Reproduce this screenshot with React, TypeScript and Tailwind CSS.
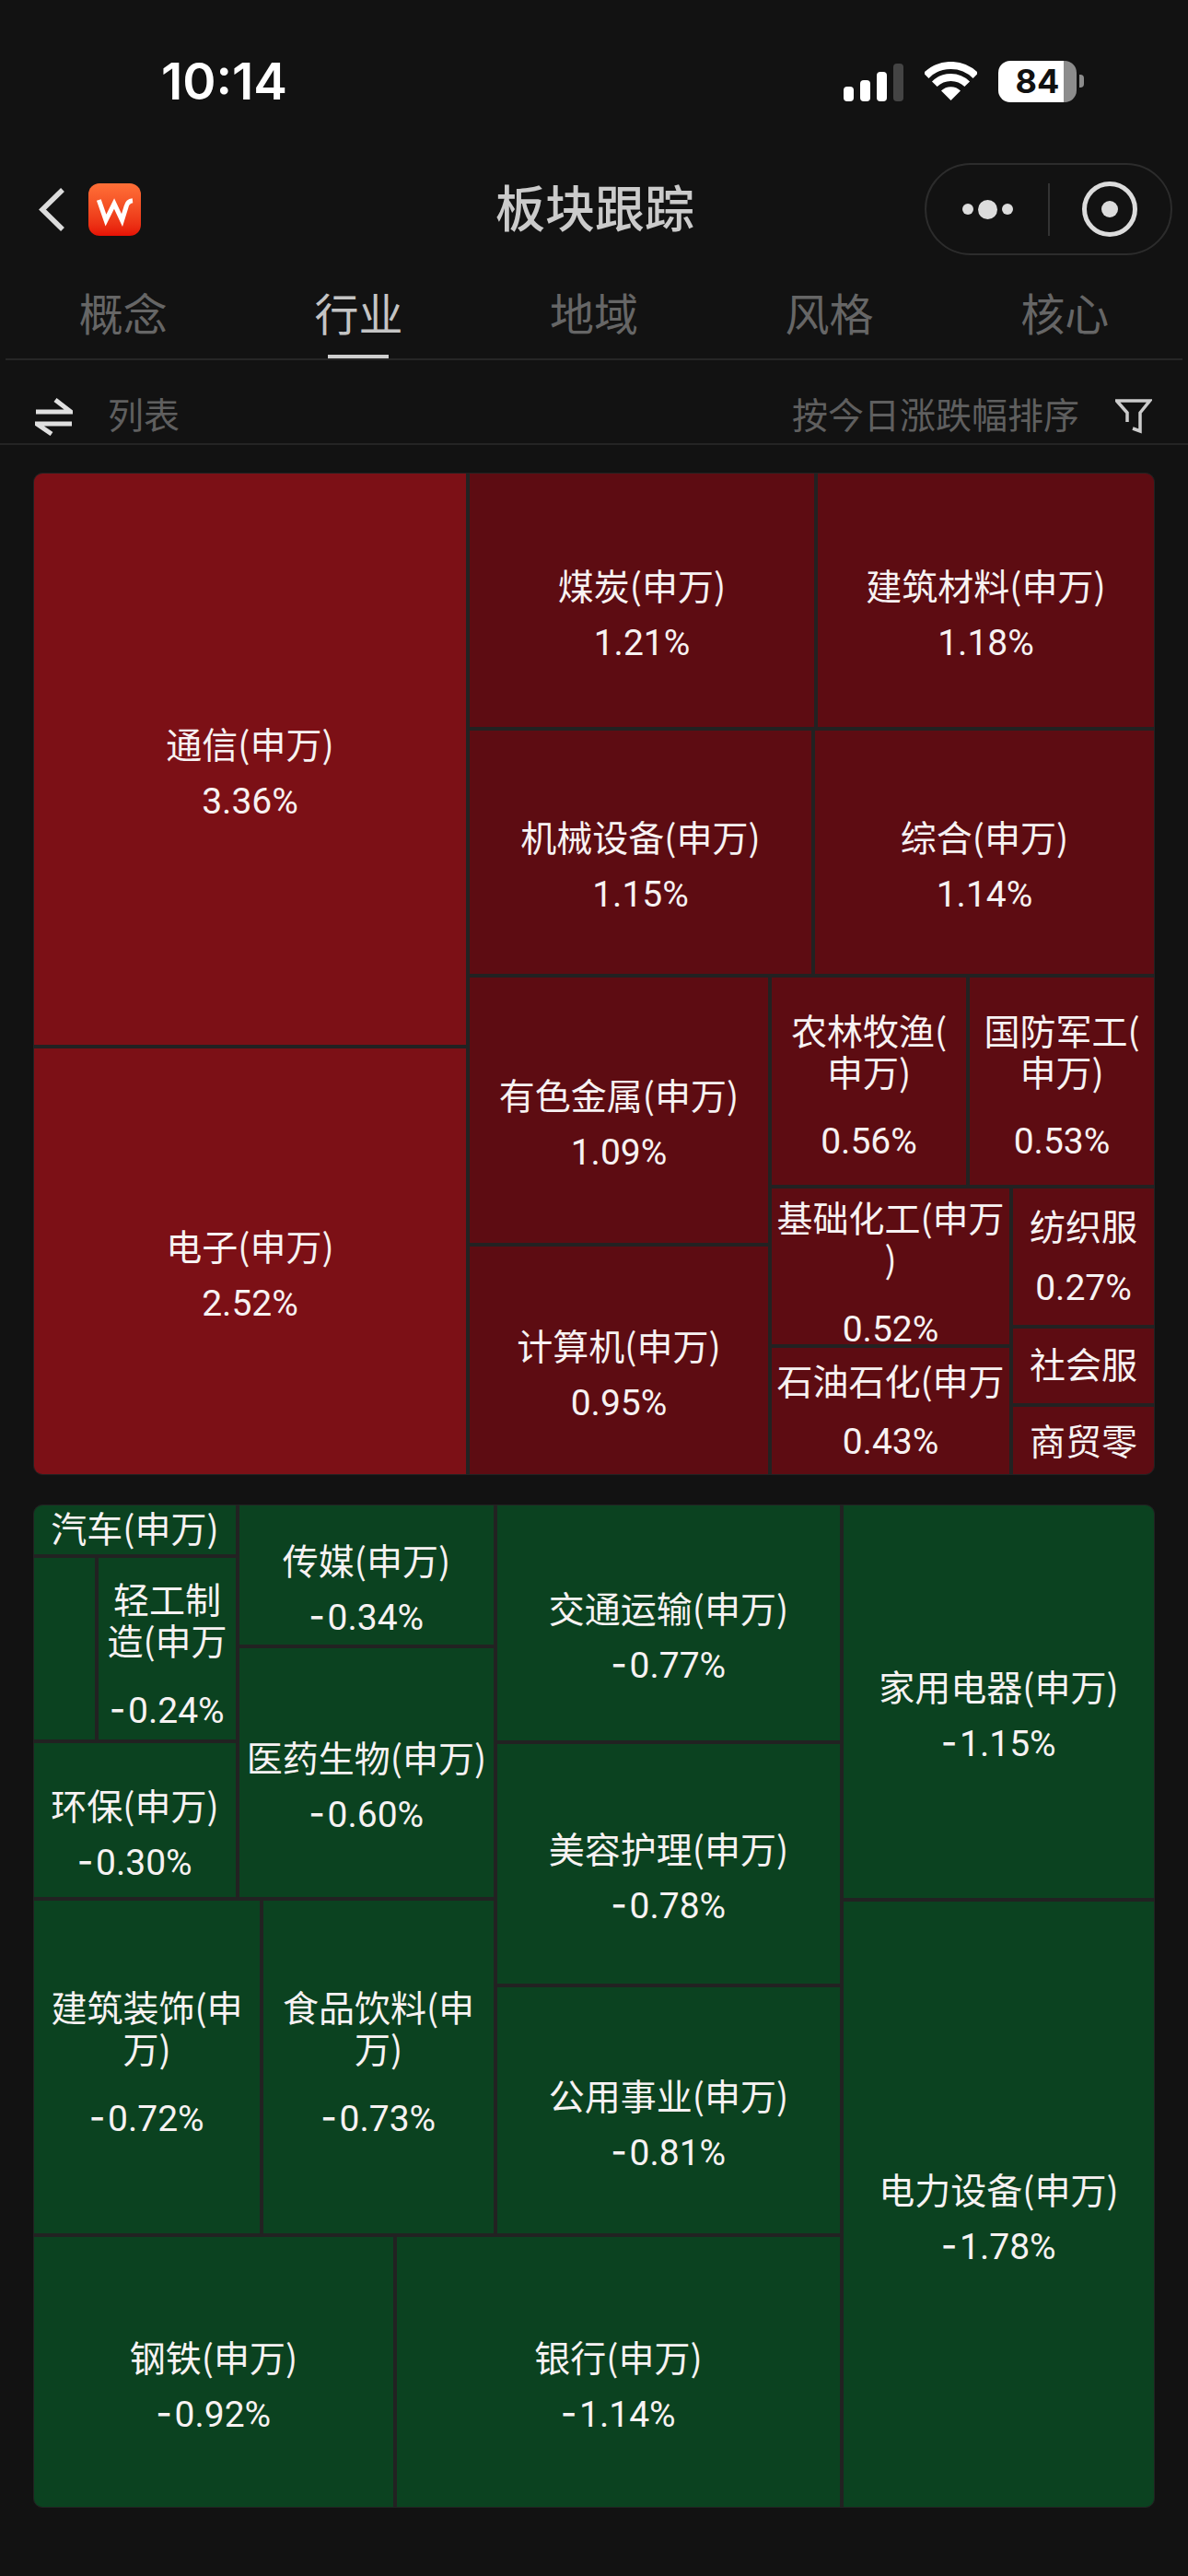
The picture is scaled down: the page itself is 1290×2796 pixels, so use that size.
// Sector tracker: status bar, nav, tabs and two treemaps
const red = 'bg-[#7c1016]';
const dark = 'bg-[#5d0c12]';
const green = 'bg-[#0b4220]';

type CellProps = {
  name: string;
  pct?: string;
  color: string;
  size: string;
  shift?: string; // nudges the label block inside the cell
  gap?: string; // space between name and percent
};

function Cell({ name, pct, color, size, shift = 'pt-[29px]', gap = 'mt-[19px]' }: CellProps) {
  const negative = pct?.startsWith('-');
  return (
    <div className={`${color} ${size} ${shift} flex flex-col items-center justify-center overflow-hidden px-[2px] text-center text-[39px] leading-[45px] text-[#f7f2f2]`}>
      <div className="w-full shrink-0 [line-break:anywhere]">{name}</div>
      {pct && (
        <div className={`${gap} ${negative ? "first-letter:mr-[3px] first-letter:text-[48px] first-letter:leading-[0px] first-letter:[font-family:'Noto_Sans_CJK_SC']" : ''} h-[45px] shrink-0 text-[39px] leading-[45px] [font-family:Roboto,sans-serif]`}>
          {pct}
        </div>
      )}
    </div>
  );
}

function StatusBar() {
  return (
    <div className="flex h-[176px] items-center justify-between pl-[175px] pr-[113px]">
      <div className="text-[55px] font-semibold leading-none text-white [font-family:Inter,sans-serif]">10:14</div>
      <div className="flex items-center">
        <svg width="65" height="41" viewBox="0 0 65 41" className="mt-[2px]">
          <rect x="0" y="25" width="11" height="16" rx="4" fill="#fff" />
          <rect x="18" y="18" width="11" height="23" rx="4" fill="#fff" />
          <rect x="36" y="9" width="11" height="32" rx="4" fill="#fff" />
          <rect x="54" y="0" width="11" height="41" rx="4" fill="#444" />
        </svg>
        <svg width="57" height="42" viewBox="0 0 57 42" className="ml-[23px]" fill="none">
          <path d="M1.6 15.1A38 38 0 0 1 55.4 15.1" stroke="#fff" strokeWidth="8" />
          <path d="M10.8 24.3A25 25 0 0 1 46.2 24.3" stroke="#fff" strokeWidth="8" />
          <path d="M28.5 42L18 31.5A15 15 0 0 1 39 31.5Z" fill="#fff" />
        </svg>
        <div className="ml-[23px] flex h-[45px] w-[85px] items-center justify-center rounded-[13px] bg-[linear-gradient(to_right,#fff_84%,#8c8c8c_84%)] text-[36px] font-bold leading-none text-[#111] [font-family:Inter,sans-serif]">
          84
        </div>
        <div className="ml-[3px] h-[14px] w-[5px] rounded-r-[4px] bg-[#8c8c8c]" />
      </div>
    </div>
  );
}

function NavBar() {
  return (
    <div className="grid h-[102px] grid-cols-[497px_auto_1fr] items-center pl-[41px] pr-[17px]">
      <div className="flex items-center">
        <svg width="31" height="51" viewBox="0 0 31 51" fill="none">
          <path d="M27 4L5 25.5L27 47" stroke="#dcdcdc" strokeWidth="5.5" />
        </svg>
        <div className="ml-[24px] h-[57px] w-[57px] rounded-[12px] bg-gradient-to-b from-[#ff6f37] to-[#e60f05]">
          <svg width="57" height="57" viewBox="0 0 57 57" fill="none">
            <path d="M11.3 18L19 40L28 22L36.5 40L41 25.5C42 21 45 19 48 18.7" stroke="#fff" strokeWidth="5" />
          </svg>
        </div>
      </div>
      <div className="pb-[6px] text-[54px] font-medium leading-none text-[#cbcbcb]">板块跟踪</div>
      <div className="flex justify-end">
        <div className="flex h-[100px] w-[269px] items-center rounded-full border-2 border-[#2c2c2c]">
          <div className="flex flex-1 items-center justify-center gap-[5px]">
            <div className="h-[12px] w-[12px] rounded-full bg-[#dcdcdc]" />
            <div className="h-[21px] w-[21px] rounded-full bg-[#dcdcdc]" />
            <div className="h-[12px] w-[12px] rounded-full bg-[#dcdcdc]" />
          </div>
          <div className="h-[57px] w-[2px] bg-[#333]" />
          <div className="flex w-[131px] items-center justify-center pr-[2px]">
            <div className="flex h-[60px] w-[60px] items-center justify-center rounded-full border-[5px] border-[#dcdcdc]">
              <div className="h-[18px] w-[18px] rounded-full bg-[#dcdcdc]" />
            </div>
          </div>
        </div>
      </div>
    </div>
  );
}

function Tabs() {
  const tabs = ['概念', '行业', '地域', '风格', '核心'];
  return (
    <div className="mx-[6px] flex h-[113px] border-b-2 border-[#262626]">
      {tabs.map((tab, i) => (
        <div key={tab} className={`relative flex-1 pt-[36px] text-center text-[48px] leading-[48px] ${i === 1 ? 'text-[#c4c4c4]' : 'text-[#666]'}`}>
          {tab}
          {i === 1 && <div className="absolute bottom-0 left-1/2 h-[4px] w-[66px] -translate-x-1/2 bg-[#cfcfcf]" />}
        </div>
      ))}
    </div>
  );
}

function FilterBar() {
  return (
    <div className="flex h-[92px] items-center justify-between border-b-2 border-[#242424] pl-[38px] pr-[39px] pt-[28px] text-[39px] leading-none text-[#5f5f5f]">
      <div className="flex items-center">
        <svg width="41" height="41" viewBox="0 0 41 41" fill="none" stroke="#e0e0e0" strokeWidth="5" className="mt-[5px]">
          <path d="M1 15H39L22 2" />
          <path d="M40 28H2L18 39" />
        </svg>
        <span className="mb-[3px] ml-[38px]">列表</span>
      </div>
      <div className="flex items-center">
        <span className="mb-[3px]">按今日涨跌幅排序</span>
        <svg width="40" height="40" viewBox="0 0 40 40" fill="none" stroke="#cccccc" strokeWidth="3.5" className="ml-[39px] mt-[3px]">
          <path d="M13 26V16L1.5 3H37.5L27 16V36L19 33" />
        </svg>
      </div>
    </div>
  );
}

function RedMap() {
  return (
    <div className="mx-[36px] mt-[30px] flex h-[1088px] w-[1218px] gap-[4px] overflow-hidden rounded-[10px] border border-[#222] bg-[#222]">
      <div className="flex w-[469px] flex-col gap-[4px]">
        <Cell name="通信(申万)" pct="3.36%" color={red} size="h-[620px]" />
        <Cell name="电子(申万)" pct="2.52%" color={red} size="h-[462px]" />
      </div>
      <div className="flex w-[743px] flex-col gap-[4px]">
        <div className="flex h-[275px] gap-[4px]">
          <Cell name="煤炭(申万)" pct="1.21%" color={dark} size="w-[374px]" />
          <Cell name="建筑材料(申万)" pct="1.18%" color={dark} size="w-[365px]" />
        </div>
        <div className="flex h-[264px] gap-[4px]">
          <Cell name="机械设备(申万)" pct="1.15%" color={dark} size="w-[371px]" />
          <Cell name="综合(申万)" pct="1.14%" color={dark} size="w-[368px]" />
        </div>
        <div className="flex h-[539px] gap-[4px]">
          <div className="flex w-[324px] flex-col gap-[4px]">
            <Cell name="有色金属(申万)" pct="1.09%" color={dark} size="h-[288px]" />
            <Cell name="计算机(申万)" pct="0.95%" color={dark} size="h-[247px]" />
          </div>
          <div className="flex w-[415px] flex-col gap-[4px]">
            <div className="flex h-[225px] gap-[4px]">
              <Cell name="农林牧渔(申万)" pct="0.56%" color={dark} size="w-[211px]" shift="pt-[10px]" gap="mt-[32px]" />
              <Cell name="国防军工(申万)" pct="0.53%" color={dark} size="w-[200px]" shift="pt-[10px]" gap="mt-[32px]" />
            </div>
            <div className="flex h-[310px] gap-[4px]">
              <div className="flex w-[258px] flex-col gap-[4px]">
                <Cell name="基础化工(申万)" pct="0.52%" color={dark} size="h-[169px]" shift="pt-[14px]" gap="mt-[33px]" />
                <Cell name="石油石化(申万" pct="0.43%" color={dark} size="h-[137px]" shift="pb-[1px]" gap="mt-[23px]" />
              </div>
              <div className="flex w-[153px] flex-col gap-[4px]">
                <Cell name="纺织服" pct="0.27%" color={dark} size="h-[148px]" shift="pt-0" gap="mt-[24px]" />
                <Cell name="社会服" color={dark} size="h-[81px]" shift="pb-[6px]" />
                <Cell name="商贸零" color={dark} size="h-[73px]" shift="pb-[3px]" />
              </div>
            </div>
          </div>
        </div>
      </div>
    </div>
  );
}

function GreenMap() {
  return (
    <div className="mx-[36px] mt-[32px] flex h-[1089px] w-[1218px] gap-[4px] overflow-hidden rounded-[10px] border border-[#222] bg-[#222]">
      <div className="flex w-[875px] flex-col gap-[4px]">
        <div className="flex h-[790px] gap-[4px]">
          <div className="flex w-[499px] flex-col gap-[4px]">
            <div className="flex h-[425px] gap-[4px]">
              <div className="flex w-[219px] flex-col gap-[4px]">
                <Cell name="汽车(申万)" color={green} size="h-[53px]" shift="pb-[6px]" />
                <div className="flex h-[197px] gap-[4px]">
                  <div className={`${green} w-[66px]`} />
                  <Cell name="轻工制造(申万" pct="-0.24%" color={green} size="w-[149px]" shift="pt-[13px]" gap="mt-[33px]" />
                </div>
                <Cell name="环保(申万)" pct="-0.30%" color={green} size="h-[167px]" />
              </div>
              <div className="flex w-[276px] flex-col gap-[4px]">
                <Cell name="传媒(申万)" pct="-0.34%" color={green} size="h-[151px]" />
                <Cell name="医药生物(申万)" pct="-0.60%" color={green} size="h-[270px]" />
              </div>
            </div>
            <div className="flex h-[361px] gap-[4px]">
              <Cell name="建筑装饰(申万)" pct="-0.72%" color={green} size="w-[245px]" shift="pb-[9px]" gap="mt-[33px]" />
              <Cell name="食品饮料(申万)" pct="-0.73%" color={green} size="w-[250px]" shift="pb-[9px]" gap="mt-[33px]" />
            </div>
          </div>
          <div className="flex w-[372px] flex-col gap-[4px]">
            <Cell name="交通运输(申万)" pct="-0.77%" color={green} size="h-[255px]" />
            <Cell name="美容护理(申万)" pct="-0.78%" color={green} size="h-[260px]" />
            <Cell name="公用事业(申万)" pct="-0.81%" color={green} size="h-[267px]" />
          </div>
        </div>
        <div className="flex h-[293px] gap-[4px]">
          <Cell name="钢铁(申万)" pct="-0.92%" color={green} size="w-[390px]" />
          <Cell name="银行(申万)" pct="-1.14%" color={green} size="w-[481px]" />
        </div>
      </div>
      <div className="flex w-[337px] flex-col gap-[4px]">
        <Cell name="家用电器(申万)" pct="-1.15%" color={green} size="h-[426px]" />
        <Cell name="电力设备(申万)" pct="-1.78%" color={green} size="h-[657px]" />
      </div>
    </div>
  );
}

export default function App() {
  return (
    <div className="min-h-[2796px] bg-[#121212] [font-family:'Noto_Sans_CJK_SC',sans-serif]">
      <StatusBar />
      <NavBar />
      <Tabs />
      <FilterBar />
      <RedMap />
      <GreenMap />
    </div>
  );
}
